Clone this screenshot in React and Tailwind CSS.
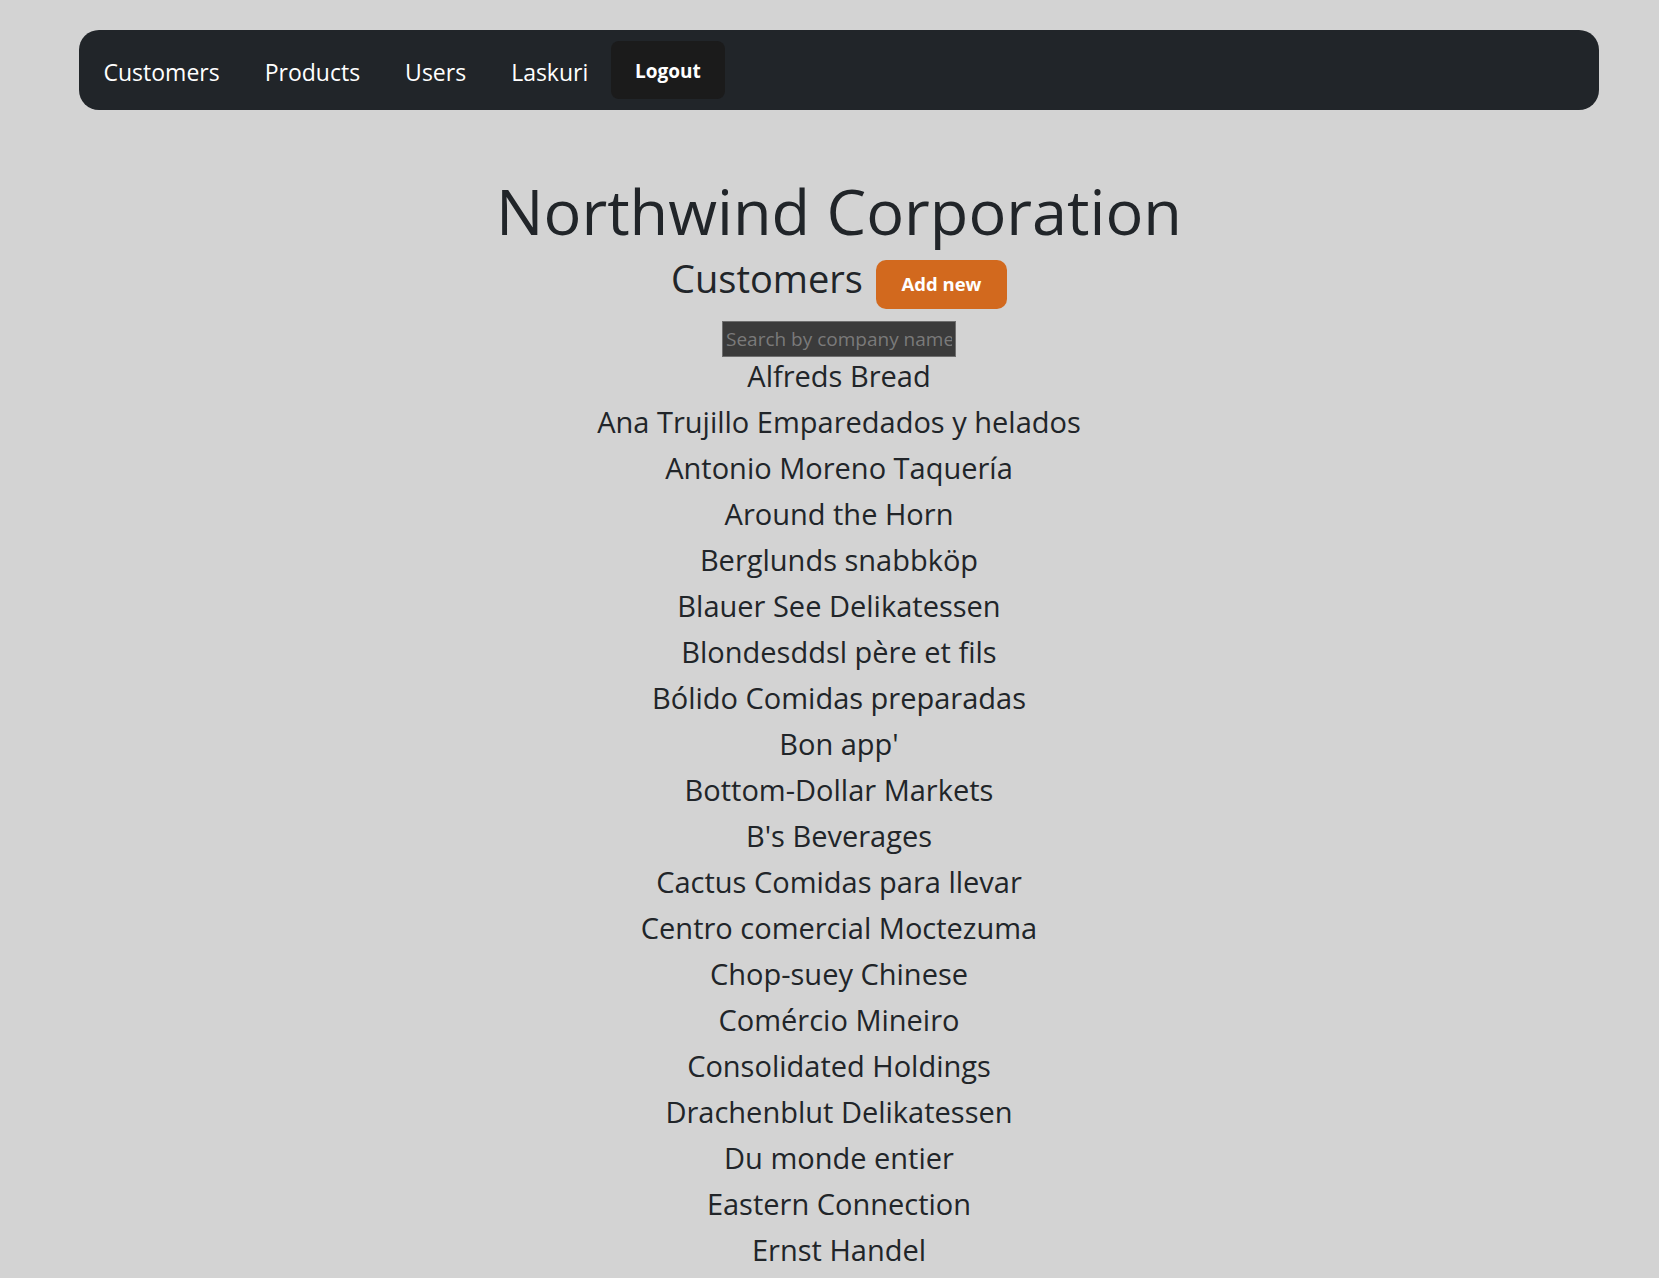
import React from "react";

const customers = [
  "Alfreds Bread",
  "Ana Trujillo Emparedados y helados",
  "Antonio Moreno Taquería",
  "Around the Horn",
  "Berglunds snabbköp",
  "Blauer See Delikatessen",
  "Blondesddsl père et fils",
  "Bólido Comidas preparadas",
  "Bon app'",
  "Bottom-Dollar Markets",
  "B's Beverages",
  "Cactus Comidas para llevar",
  "Centro comercial Moctezuma",
  "Chop-suey Chinese",
  "Comércio Mineiro",
  "Consolidated Holdings",
  "Drachenblut Delikatessen",
  "Du monde entier",
  "Eastern Connection",
  "Ernst Handel",
  "Familia Arquibaldo",
  "FISSA Fabrica Inter. Salchichas S.A.",
  "Folies gourmandes",
];

export default function App() {
  return (
    <div className="min-h-screen bg-[#d3d3d3] pt-[30px] pl-[79px] pr-[60px] pb-10 font-['Open_Sans','Noto_Sans',sans-serif] text-[#212529]">
      <nav className="h-[80px] rounded-[20px] bg-[#212529] flex items-center pl-[2px]">
        {["Customers", "Products", "Users", "Laskuri"].map((l) => (
          <a key={l} className="px-[22.5px] pt-[4px] text-white text-[23px] leading-none cursor-pointer">
            {l}
          </a>
        ))}
        <button className="h-[58px] w-[114px] rounded-[8px] bg-[#1b1b1b] pt-[2px] text-white font-bold text-[19px] leading-none">
          Logout
        </button>
      </nav>
      <main className="flex flex-col items-center">
        <h1 className="mt-[69px] text-[63px] leading-none font-normal">Northwind Corporation</h1>
        <div className="mt-[17px] flex items-start gap-[13px]">
          <h2 className="text-[38px] leading-none font-normal">Customers</h2>
          <button className="mt-[1px] h-[49px] w-[131px] rounded-[10px] bg-[#d2691e] text-white font-bold text-[18.5px] leading-none">
            Add new
          </button>
        </div>
        <input
          type="text"
          placeholder="Search by company name"
          className="mt-[12px] h-[36px] w-[234px] bg-[#3b3b3b] border border-[#6e6e6e] px-[3px] text-[19px] text-white placeholder:text-[#7a7a7a] outline-none"
        />
        <ul className="mt-[-4px] flex flex-col items-center">
          {customers.map((c) => (
            <li key={c} className="text-[29px] leading-[46px]">
              {c}
            </li>
          ))}
        </ul>
      </main>
    </div>
  );
}
